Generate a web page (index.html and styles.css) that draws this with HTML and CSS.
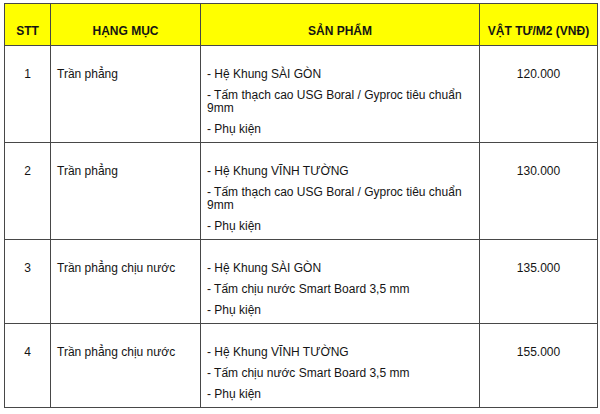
FILE: index.html
```html
<!DOCTYPE html>
<html lang="vi">
<head>
<meta charset="utf-8">
<link rel="stylesheet" href="styles.css">
</head>
<body>
<table class="price">
  <colgroup>
    <col class="c-stt"><col class="c-cat"><col class="c-prod"><col class="c-price">
  </colgroup>
  <thead>
    <tr>
      <th>STT</th>
      <th>HẠNG MỤC</th>
      <th>SẢN PHẨM</th>
      <th>VẬT TƯ/M2 (VNĐ)</th>
    </tr>
  </thead>
  <tbody>
    <tr class="tall">
      <td class="num">1</td>
      <td class="cat"><p>Trần phẳng</p></td>
      <td class="prod"><p>- Hệ Khung SÀI GÒN</p><p>- Tấm thạch cao USG Boral / Gyproc tiêu chuẩn 9mm</p><p>- Phụ kiện</p></td>
      <td class="num"><p>120.000</p></td>
    </tr>
    <tr class="tall">
      <td class="num">2</td>
      <td class="cat"><p>Trần phẳng</p></td>
      <td class="prod"><p>- Hệ Khung VĨNH TƯỜNG</p><p>- Tấm thạch cao USG Boral / Gyproc tiêu chuẩn 9mm</p><p>- Phụ kiện</p></td>
      <td class="num"><p>130.000</p></td>
    </tr>
    <tr>
      <td class="num">3</td>
      <td class="cat"><p>Trần phẳng chịu nước</p></td>
      <td class="prod"><p>- Hệ Khung SÀI GÒN</p><p>- Tấm chịu nước Smart Board 3,5 mm</p><p>- Phụ kiện</p></td>
      <td class="num"><p>135.000</p></td>
    </tr>
    <tr>
      <td class="num">4</td>
      <td class="cat"><p>Trần phẳng chịu nước</p></td>
      <td class="prod"><p>- Hệ Khung VĨNH TƯỜNG</p><p>- Tấm chịu nước Smart Board 3,5 mm</p><p>- Phụ kiện</p></td>
      <td class="num"><p>155.000</p></td>
    </tr>
  </tbody>
</table>
</body>
</html>
```
FILE: styles.css
```css
html, body {
  margin: 0;
  background: #ffffff;
}
body {
  padding: 3px 0 0 4px;
  font-family: "Liberation Sans", Arial, sans-serif;
  font-size: 12px;
  color: #141414;
}
.price {
  border-collapse: collapse;
  table-layout: fixed;
  width: 593px;
}
.c-stt { width: 46px; }
.c-cat { width: 150px; }
.c-prod { width: 279px; }
.c-price { width: 118px; }

.price th, .price td {
  border: 1px solid #474747;
  vertical-align: top;
}
.price th {
  background: #ffff00;
  height: 42px;
  box-sizing: border-box;
  padding: 21px 2px 0;
  font-size: 12px;
  font-weight: bold;
  text-align: center;
  line-height: 13px;
}
.price td {
  padding: 14px 6px 6px;
  line-height: 13px;
}
.price td p {
  margin: 8px 0 0;
}
.price td.num {
  text-align: center;
}
.price td.num:first-child {
  padding-top: 22px;
}
.price td.prod {
  padding-right: 12px;
}
.price tr.tall td {
  height: 97px;
  box-sizing: border-box;
}
.price tbody tr:not(.tall) td {
  height: 84px;
  box-sizing: border-box;
}
```
